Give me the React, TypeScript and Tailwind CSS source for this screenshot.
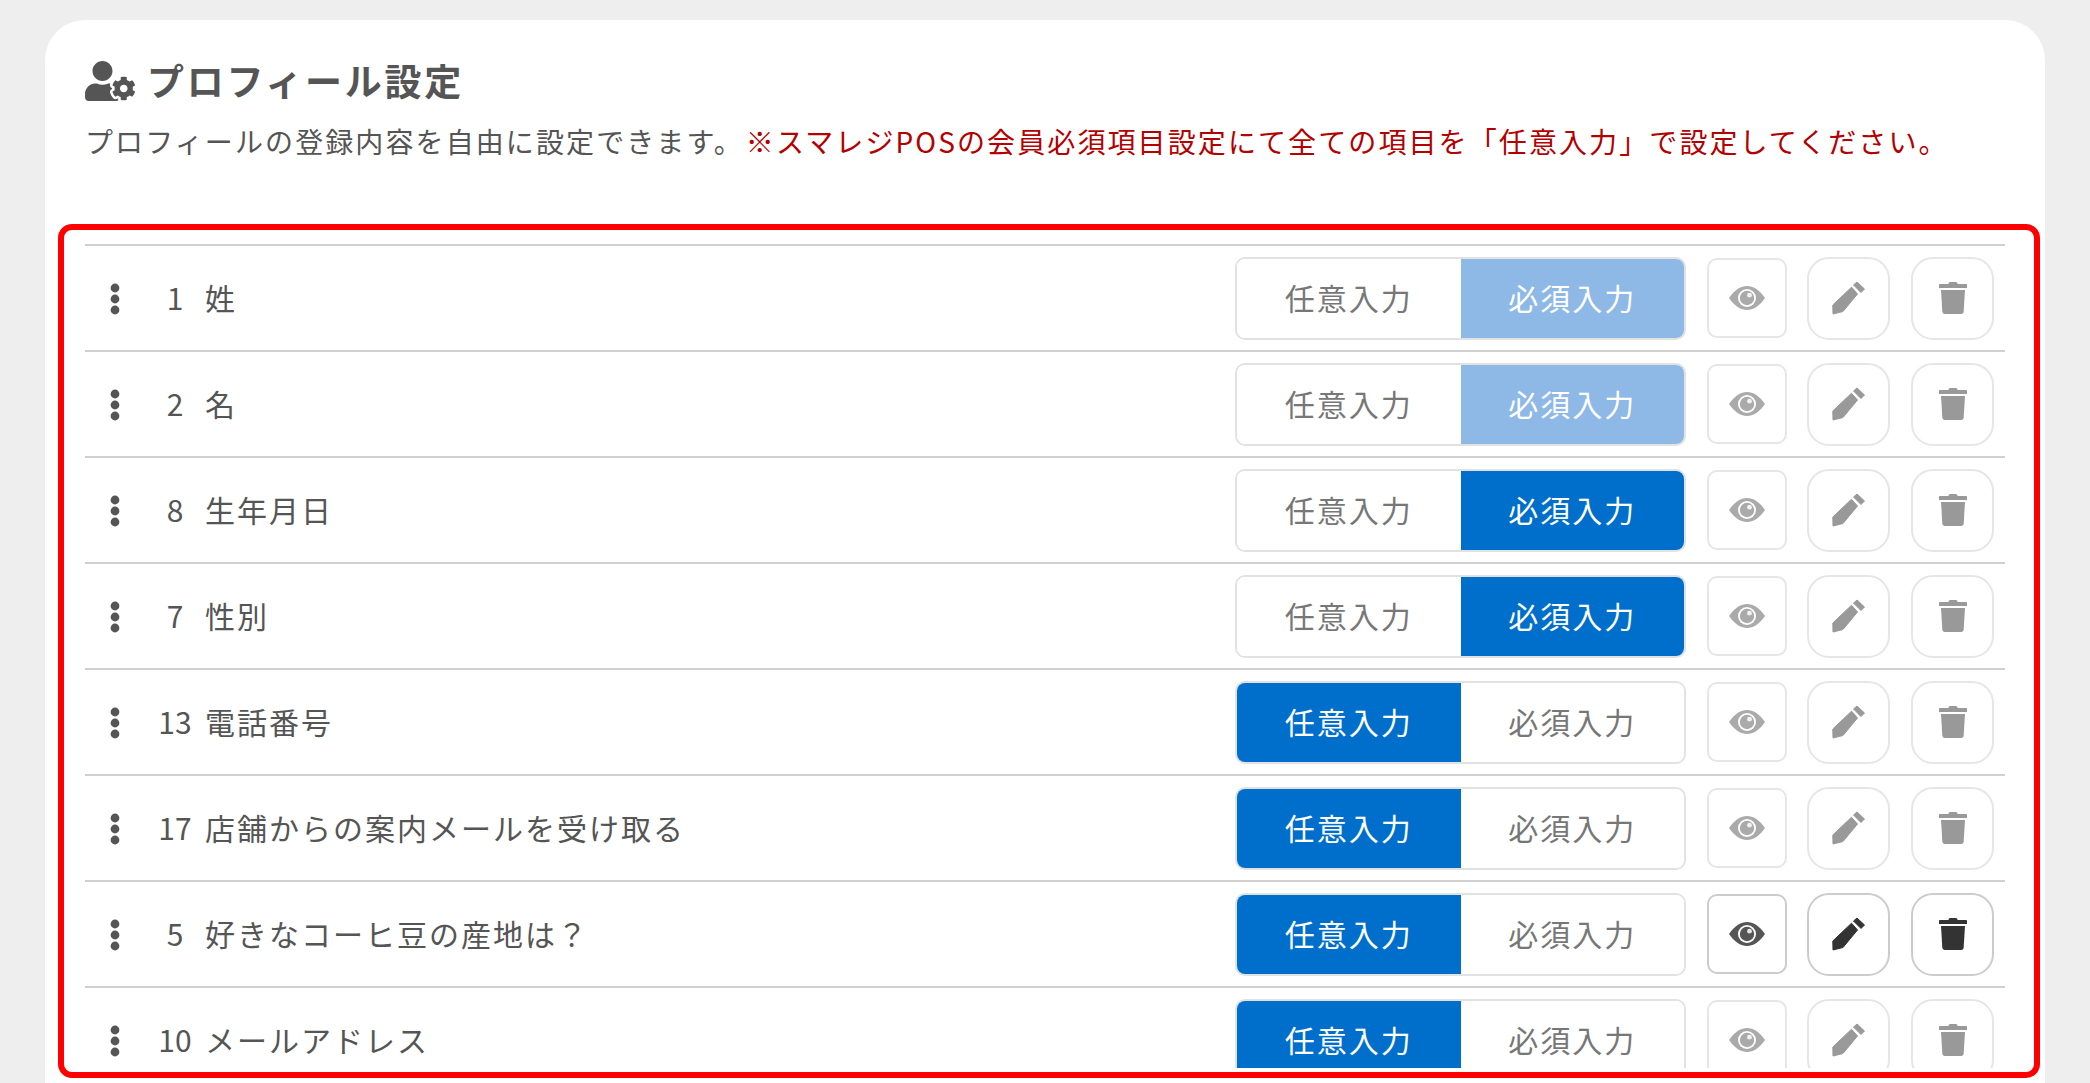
import React from "react";
import { FaUserCog } from "react-icons/fa";

type Row = { no: number; label: string; required: boolean; locked?: boolean; active?: boolean };

const rows: Row[] = [
  { no: 1, label: "姓", required: true, locked: true },
  { no: 2, label: "名", required: true, locked: true },
  { no: 8, label: "生年月日", required: true },
  { no: 7, label: "性別", required: true },
  { no: 13, label: "電話番号", required: false },
  { no: 17, label: "店舗からの案内メールを受け取る", required: false },
  { no: 5, label: "好きなコーヒ豆の産地は？", required: false, active: true },
  { no: 10, label: "メールアドレス", required: false },
];

function Segment({ on, locked, text }: { on: boolean; locked?: boolean; text: string }) {
  const tone = on
    ? locked
      ? "bg-[#8eb8e6] text-white"
      : "bg-[#006fcb] text-white"
    : "bg-white text-[#777777]";
  return (
    <div className={`flex h-full flex-1 items-center justify-center pb-[2px] tracking-[2px] ${tone}`}>{text}</div>
  );
}

function Grip() {
  return (
    <svg width="10" height="32" viewBox="0 0 10 32" fill="#555555" className="translate-y-[1px]">
      <circle cx="5" cy="5" r="4.4" />
      <circle cx="5" cy="16" r="4.4" />
      <circle cx="5" cy="27" r="4.4" />
    </svg>
  );
}

function Eye() {
  return (
    <svg width="36" height="24" viewBox="0 0 36 24" fill="currentColor">
      <path d="M0 12 C6 3.5 12 0 18 0 C24 0 30 3.5 36 12 C30 20.5 24 24 18 24 C12 24 6 20.5 0 12 Z" />
      <circle cx="18" cy="12" r="9" fill="white" />
      <circle cx="18" cy="12" r="7.2" />
      <circle cx="20.5" cy="9.2" r="2.4" fill="white" opacity="0.85" />
    </svg>
  );
}

function Pen() {
  return (
    <svg width="34" height="34" viewBox="0 0 34 34" fill="currentColor" stroke="currentColor" strokeWidth="1" strokeLinejoin="round">
      <path d="M0.8 24 L19.5 6.2 L25.5 13 L11 30.5 L1 33 Z" />
      <path d="M21.5 4 L25 1 L32.5 8 L29 11.5 Z" />
    </svg>
  );
}

function Trash() {
  return (
    <svg width="28" height="32" viewBox="0 0 28 32" fill="currentColor">
      <path d="M9.5 2 C9.5 0.6 10.5 0 11.5 0 L16.5 0 C17.5 0 18.5 0.6 18.5 2 L27 2 C27.6 2 28 2.4 28 3 L28 6 L0 6 L0 3 C0 2.4 0.4 2 1 2 Z" />
      <path d="M2 8 L26 8 L24.7 29.5 C24.6 31 23.6 32 22.2 32 L5.8 32 C4.4 32 3.4 31 3.3 29.5 Z" />
    </svg>
  );
}

function ListRow({ row }: { row: Row }) {
  const square = row.active ? "border-[#cccccc] text-[#555555]" : "border-[#e6e6e6] text-[#aaaaaa]";
  const round = row.active ? "border-[#cccccc] text-[#333333]" : "border-[#e6e6e6] text-[#999999]";
  return (
    <div className="flex h-[106px] shrink-0 items-center border-t-2 border-[#d0d0d0] text-[30px] text-[#555555]">
      <div className="flex w-[60px] items-center justify-center">
        <Grip />
      </div>
      <div className="w-[60px] pb-[2px] text-center">{row.no}</div>
      <div className="flex-1 pb-[2px] tracking-[2px]">{row.label}</div>
      <div className="flex h-[83px] w-[451px] overflow-hidden rounded-[10px] border-2 border-[#e2e2e2]">
        <Segment on={!row.required} text="任意入力" />
        <Segment on={row.required} locked={row.locked} text="必須入力" />
      </div>
      <button className={`ml-[21px] flex h-[80px] w-[80px] items-center justify-center rounded-[10px] border-2 bg-white ${square}`}>
        <Eye />
      </button>
      <button className={`ml-[20px] flex h-[83px] w-[83px] items-center justify-center rounded-[22px] border-2 bg-white ${round}`}>
        <Pen />
      </button>
      <button className={`ml-[21px] mr-[11px] flex h-[83px] w-[83px] items-center justify-center rounded-[22px] border-2 bg-white ${round}`}>
        <Trash />
      </button>
    </div>
  );
}

export default function App() {
  return (
    <div className="h-[1083px] overflow-hidden bg-[#eeeeee] px-[45px] pt-[20px] font-['Noto_Sans_CJK_JP','Noto_Sans',sans-serif]">
      <div className="h-[1200px] rounded-t-[40px] bg-white pl-[13px] pr-[5px]">
        <div className="h-[204px] pl-[27px] pt-[38px]">
          <div className="flex h-[46px] items-center text-[#555555]">
            <FaUserCog size={50} />
            <h1 className="ml-[12px] text-[37px] font-bold tracking-[2.7px]">プロフィール設定</h1>
          </div>
          <p className="mt-[17px] text-[28px] leading-[40px] tracking-[2.1px] text-[#555555]">
            プロフィールの登録内容を自由に設定できます。
            <span className="ml-[2px] text-[#b30000]">
              ※スマレジPOSの会員必須項目設定にて全ての項目を「任意入力」で設定してください。
            </span>
          </p>
        </div>
        <div className="h-[854px] rounded-[14px] border-[6px] border-[#ff0000] pb-[4px] pl-[21px] pr-[29px] pt-[14px]">
          <div className="flex h-full flex-col overflow-hidden">
            {rows.map((r) => (
              <ListRow key={r.no} row={r} />
            ))}
          </div>
        </div>
      </div>
    </div>
  );
}
